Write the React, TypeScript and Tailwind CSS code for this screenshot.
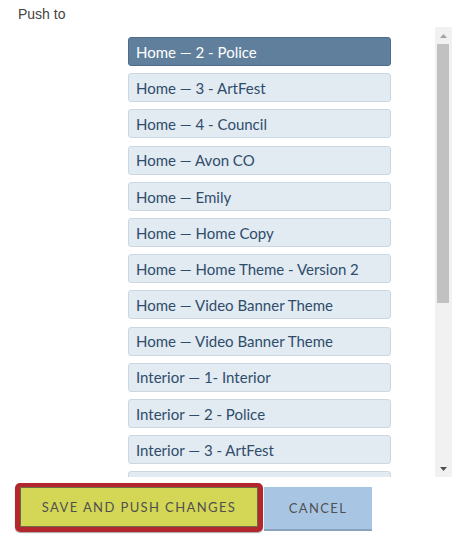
import React from "react";

const items = [
  "Home — 2 - Police",
  "Home — 3 - ArtFest",
  "Home — 4 - Council",
  "Home — Avon CO",
  "Home — Emily",
  "Home — Home Copy",
  "Home — Home Theme - Version 2",
  "Home — Video Banner Theme",
  "Home — Video Banner Theme",
  "Interior — 1- Interior",
  "Interior — 2 - Police",
  "Interior — 3 - ArtFest",
  "Interior — 4 - Council",
  "Interior — Avon CO",
  "Interior — Emily",
  "Interior — Home Copy",
  "Interior — Home Theme - Version 2",
  "Interior — Video Banner Theme",
  "Landing — Default",
  "Landing — Events",
];

export default function App() {
  return (
    <div className="w-[475px] h-[538px] bg-white overflow-hidden" style={{ fontFamily: "Lato, 'Open Sans', sans-serif" }}>
      <div
        className="pl-[18px] pt-[4px] h-[27px] text-[14px] leading-[20px] text-[#444]"
        style={{ fontFamily: "'Liberation Sans', Arial, sans-serif" }}
      >
        Push to
      </div>
      <div className="flex h-[450px]">
        <div className="w-[435px] h-[450px] overflow-hidden pl-[128px] pr-[44px] pt-[10px]">
          <div className="flex flex-col gap-[7.2px]">
            {items.map((t, i) => (
              <div
                key={i}
                className={
                  i === 0
                    ? "h-[29px] shrink-0 rounded-[3px] border border-[#4f6d8a] bg-[#607f9d] text-white pl-[7px] pr-[7px] pt-[1px] flex items-center text-[15px] whitespace-nowrap"
                    : "h-[29px] shrink-0 rounded-[3px] border border-[#cbd8e4] bg-[#e2eaf2] text-[#2f4d6b] pl-[7px] pr-[7px] pt-[1px] flex items-center text-[15px] whitespace-nowrap"
                }
              >
                {t}
              </div>
            ))}
          </div>
        </div>
        <div className="w-[17px] h-[450px] bg-[#f1f1f1] flex flex-col">
          <div className="h-[17px] flex items-center justify-center">
            <svg width="7" height="4" viewBox="0 0 7 4">
              <polygon points="3.5,0 7,4 0,4" fill="#a3a3a3" />
            </svg>
          </div>
          <div className="h-[259px] ml-[2px] w-[12px] bg-[#c1c1c1]" />
          <div className="flex-1" />
          <div className="h-[17px] flex items-center justify-center">
            <svg width="7" height="4" viewBox="0 0 7 4">
              <polygon points="0,0 7,0 3.5,4" fill="#505050" />
            </svg>
          </div>
        </div>
      </div>
      <div className="flex items-start pl-[15px] pt-[6px]">
        <div className="rounded-[5px] border-[5px] border-t-[4px] border-[#b3262e] shadow-[0_1px_1px_rgba(0,0,0,0.35)]">
          <button className="w-[238px] h-[40px] pt-[2px] border border-[#6d6d45] bg-[#d4d655] text-[#505050] text-[13px] tracking-[1.4px] flex items-center justify-center">
            SAVE AND PUSH CHANGES
          </button>
        </div>
        <button className="ml-[1px] mt-[4px] w-[108px] h-[44px] pt-[1px] bg-[#a8c6e4] border-b-2 border-[#8aa3bc] text-[#505050] text-[13px] tracking-[1.4px] flex items-center justify-center">
          CANCEL
        </button>
      </div>
    </div>
  );
}
